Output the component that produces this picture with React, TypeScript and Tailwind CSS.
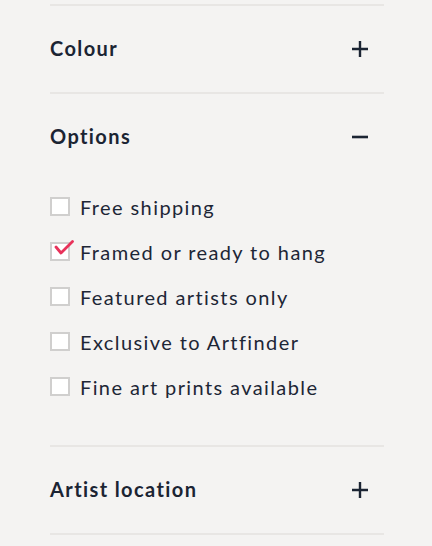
import { useState } from "react";

const options = [
  { label: "Free shipping", checked: false },
  { label: "Framed or ready to hang", checked: true },
  { label: "Featured artists only", checked: false },
  { label: "Exclusive to Artfinder", checked: false },
  { label: "Fine art prints available", checked: false },
];

const PlusIcon = () => (
  <svg width="18" height="18" viewBox="0 0 18 18" fill="none">
    <path d="M9 1v16M1 9h16" stroke="#1b2433" strokeWidth="2.4" />
  </svg>
);

const MinusIcon = () => (
  <svg width="18" height="18" viewBox="0 0 18 18" fill="none">
    <path d="M1 9h16" stroke="#1b2433" strokeWidth="2.6" />
  </svg>
);

const Checkbox = ({ checked }: { checked: boolean }) => (
  <span className="relative w-[20px] h-[19px] shrink-0 border-2 border-[#d0cfce] bg-white">
    {checked && (
      <svg
        className="absolute left-[-2px] top-[-7px]"
        width="24"
        height="20"
        viewBox="0 0 24 20"
        fill="none"
      >
        <path
          d="M6 10l5 6L22.5 4.5"
          stroke="#e8325a"
          strokeWidth="2.8"
          strokeLinecap="round"
          strokeLinejoin="round"
        />
      </svg>
    )}
  </span>
);

const Header = ({ title, open }: { title: string; open?: boolean }) => (
  <button className="w-full h-[86px] flex items-center justify-between pr-[15px] text-left">
    <span className="-mt-[3px] text-[20px] font-bold text-[#1b2433] tracking-[1.4px]">
      {title}
    </span>
    {open ? <MinusIcon /> : <PlusIcon />}
  </button>
);

const App = () => {
  const [checked, setChecked] = useState(options.map((o) => o.checked));

  return (
    <div
      className="min-h-[546px] bg-[#f4f3f2] px-[50px] pt-[4px]"
      style={{ fontFamily: "Lato, 'Noto Sans', sans-serif" }}
    >
      <div className="w-[334px]">
        <div className="border-t-2 border-[#e8e6e4]">
          <Header title="Colour" />
        </div>

        <div className="border-t-2 border-[#e8e6e4]">
          <Header title="Options" open />
          <ul className="pt-[4px] pb-[36px]">
            {options.map((o, i) => (
              <li key={o.label}>
                <label
                  className="h-[45px] flex items-center gap-[10px] cursor-pointer"
                  onClick={() =>
                    setChecked((c) => c.map((v, j) => (j === i ? !v : v)))
                  }
                >
                  <Checkbox checked={checked[i]} />
                  <span className="text-[20px] text-[#1d2636] tracking-[1.4px]">
                    {o.label}
                  </span>
                </label>
              </li>
            ))}
          </ul>
        </div>

        <div className="border-t-2 border-b-2 border-[#e8e6e4]">
          <Header title="Artist location" />
        </div>
      </div>
    </div>
  );
};

export default App;
